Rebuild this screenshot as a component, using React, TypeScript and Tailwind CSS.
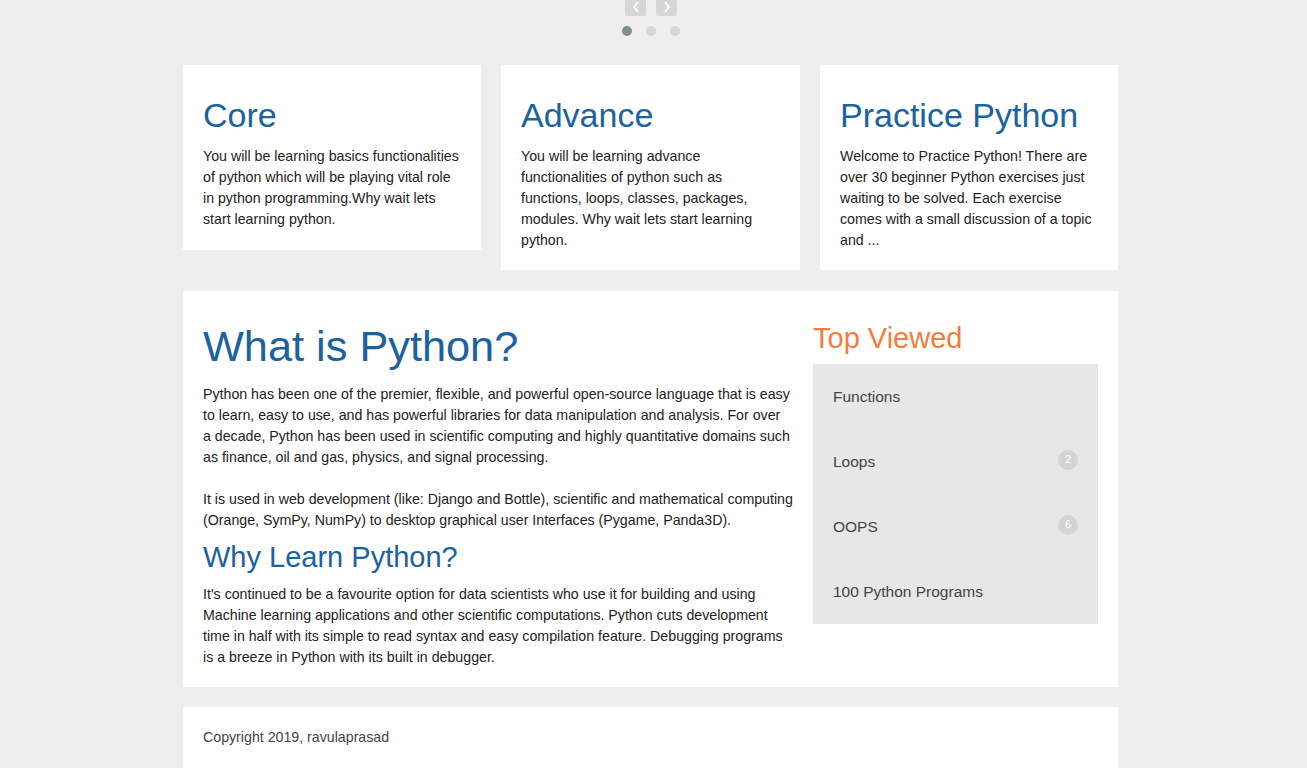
import React from "react";

const font = { fontFamily: '"Liberation Sans", Arial, sans-serif' };

function Card({ title, text, h }: { title: string; text: string; h: string }) {
  return (
    <div className={`bg-white px-5 pt-[32px] ${h}`}>
      <h2 className="text-[34px] leading-[37px] text-[#1a62a0] mb-[12px]">{title}</h2>
      <p className="text-[14.2px] leading-[21px] text-[#222]">{text}</p>
    </div>
  );
}

export default function App() {
  const items: [string, string | null][] = [
    ["Functions", null],
    ["Loops", "2"],
    ["OOPS", "6"],
    ["100 Python Programs", null],
  ];
  return (
    <div style={font} className="bg-[#eeeeee] min-h-[768px] w-full">
      <div className="flex flex-col items-center mr-[5px]">
        <div className="flex gap-[10px] h-[16px] items-end">
          <button className="w-[21px] h-[16px] bg-[#d6d6d6] rounded-b-[2px] flex items-center justify-center">
            <svg width="10" height="12" viewBox="0 0 10 12"><path d="M7 0 L3 5 L7 10" fill="none" stroke="#fff" strokeWidth="1.8" /></svg>
          </button>
          <button className="w-[21px] h-[16px] bg-[#d6d6d6] rounded-b-[2px] flex items-center justify-center">
            <svg width="10" height="12" viewBox="0 0 10 12"><path d="M3 0 L7 5 L3 10" fill="none" stroke="#fff" strokeWidth="1.8" /></svg>
          </button>
        </div>
        <div className="flex gap-[14px] mt-[10px]">
          <span className="w-[10px] h-[10px] rounded-full bg-[#7f908c]" />
          <span className="w-[10px] h-[10px] rounded-full bg-[#d6d6d6]" />
          <span className="w-[10px] h-[10px] rounded-full bg-[#d6d6d6]" />
        </div>
      </div>

      <div className="w-[935px] ml-[183px] mt-[29px]">
        <div className="grid grid-cols-[298px_299px_298px] gap-x-[20px] items-start">
          <Card
            h="h-[185px]"
            title="Core"
            text="You will be learning basics functionalities of python which will be playing vital role in python programming.Why wait lets start learning python."
          />
          <Card
            h="h-[205px]"
            title="Advance"
            text="You will be learning advance functionalities of python such as functions, loops, classes, packages, modules. Why wait lets start learning python."
          />
          <Card
            h="h-[205px]"
            title="Practice Python"
            text="Welcome to Practice Python! There are over 30 beginner Python exercises just waiting to be solved. Each exercise comes with a small discussion of a topic and ..."
          />
        </div>

        <div className="bg-white mt-[21px] h-[396px] px-5 pt-[31px] flex gap-[20px]">
          <div className="w-[590px]">
            <h1 className="text-[43.3px] leading-[48px] text-[#1a62a0] mb-[14px]">What is Python?</h1>
            <p className="text-[14.2px] leading-[21px] text-[#222] w-[587px]">
              Python has been one of the premier, flexible, and powerful open-source language that is easy to learn, easy to use, and has powerful libraries for data manipulation and analysis. For over a decade, Python has been used in scientific computing and highly quantitative domains such as finance, oil and gas, physics, and signal processing.
            </p>
            <p className="text-[14.2px] leading-[21px] text-[#222] mt-[21px]">
              It is used in web development (like: Django and Bottle), scientific and mathematical computing (Orange, SymPy, NumPy) to desktop graphical user Interfaces (Pygame, Panda3D).
            </p>
            <h2 className="text-[29px] leading-[33px] text-[#1a62a0] mt-[10px] mb-[10px]">Why Learn Python?</h2>
            <p className="text-[14.2px] leading-[21px] text-[#222]">
              It's continued to be a favourite option for data scientists who use it for building and using Machine learning applications and other scientific computations. Python cuts development time in half with its simple to read syntax and easy compilation feature. Debugging programs is a breeze in Python with its built in debugger.
            </p>
          </div>
          <div className="w-[285px]">
            <h3 className="text-[29px] leading-[31px] text-[#f47c3c] mb-[10px] mt-[1px]">Top Viewed</h3>
            <ul className="bg-[#e7e7e7]">
              {items.map(([label, badge]) => (
                <li key={label} className="h-[65px] flex items-center justify-between pl-[20px] pr-[20px]">
                  <span className="text-[15.5px] text-[#444]">{label}</span>
                  {badge && (
                    <span className="w-[20px] h-[20px] rounded-full bg-[#d4d4d4] text-white text-[11px] flex items-center justify-center -mt-[4px]">
                      {badge}
                    </span>
                  )}
                </li>
              ))}
            </ul>
          </div>
        </div>

        <div className="bg-white mt-[20px] h-[70px] px-5 pt-[20px]">
          <p className="text-[14.2px] leading-[20px] text-[#444]">Copyright 2019, ravulaprasad</p>
        </div>
      </div>
    </div>
  );
}
